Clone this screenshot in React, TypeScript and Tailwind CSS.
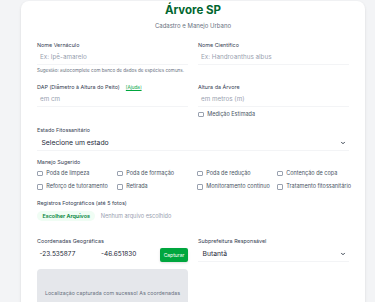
import React from "react"
import { ChevronDown } from "lucide-react"

function Label({ children }: { children: React.ReactNode }) {
  return <label className="block text-[5.4px] leading-[7px] text-gray-700">{children}</label>
}

function Input({ placeholder, value }: { placeholder?: string; value?: string }) {
  return (
    <div className="mt-[2.5px] h-[14px] px-[3px] flex items-center border-b border-gray-100 bg-white">
      {value ? (
        <span className="text-[6.5px] text-gray-800">{value}</span>
      ) : (
        <span className="text-[6.3px] text-gray-400">{placeholder}</span>
      )}
    </div>
  )
}

function Select({ value }: { value: string }) {
  return (
    <div className="mt-[2px] h-[15px] pl-[4.5px] pr-[3px] flex items-center justify-between border-b border-gray-100 bg-white">
      <span className="text-[6.8px] text-gray-800">{value}</span>
      <ChevronDown className="w-[6px] h-[6px] text-gray-800" strokeWidth={3.5} />
    </div>
  )
}

function Check({ label }: { label: string }) {
  return (
    <div className="flex items-center gap-[3.8px] text-[5.5px] leading-[7px] text-gray-600 whitespace-nowrap">
      <span className="w-[5.5px] h-[5.5px] border border-gray-400 rounded-[1px] bg-white shrink-0" />
      {label}
    </div>
  )
}

const manejos = [
  "Poda de limpeza",
  "Poda de formação",
  "Poda de redução",
  "Contenção de copa",
  "Reforço de tutoramento",
  "Retirada",
  "Monitoramento contínuo",
  "Tratamento fitossanitário",
]

export default function App() {
  return (
    <div className="min-h-screen bg-gray-100 font-['Inter',sans-serif] pl-[21px] pr-[10px] pt-px">
      <div className="bg-white shadow-sm rounded-lg px-4 pt-[2px] pb-4">
        <h1 className="text-center text-[11.5px] leading-[14px] font-bold text-green-800">Árvore SP</h1>
        <p className="mt-[4.5px] text-center text-[6px] leading-[8px] text-gray-500">Cadastro e Manejo Urbano</p>

        <div className="mt-3 grid grid-cols-2 gap-x-[10px] gap-y-[9.5px]">
          <div>
            <Label>Nome Vernáculo</Label>
            <Input placeholder="Ex: Ipê-amarelo" />
            <p className="mt-[3px] text-[4.6px] leading-[6px] text-gray-500">
              Sugestão: autocomplete com banco de dados de espécies comuns.
            </p>
          </div>
          <div>
            <Label>Nome Científico</Label>
            <Input placeholder="Ex: Handroanthus albus" />
          </div>
          <div>
            <Label>
              DAP (Diâmetro à Altura do Peito)
              <span className="ml-[6px] text-[4.6px] text-green-600 underline">[Ajuda]</span>
            </Label>
            <Input placeholder="em cm" />
          </div>
          <div>
            <Label>Altura da Árvore</Label>
            <Input placeholder="em metros (m)" />
            <div className="mt-[4.2px]">
              <Check label="Medição Estimada" />
            </div>
          </div>
        </div>

        <div className="mt-[8.5px]">
          <Label>Estado Fitossanitário</Label>
          <Select value="Selecione um estado" />
        </div>

        <div className="mt-[8.3px]">
          <Label>Manejo Sugerido</Label>
          <div className="mt-[4px] grid grid-cols-4 gap-x-2 gap-y-[6.4px]">
            {manejos.map((m) => (
              <Check key={m} label={m} />
            ))}
          </div>
        </div>

        <div className="mt-[9.6px]">
          <Label>Registros Fotográficos (até 5 fotos)</Label>
          <div className="mt-[4.5px] flex items-center gap-[5.3px]">
            <button className="h-[10px] px-[5.5px] rounded-full bg-green-50 text-green-700 font-semibold text-[5.4px]">
              Escolher Arquivos
            </button>
            <span className="text-[5.6px] text-gray-400">Nenhum arquivo escolhido</span>
          </div>
        </div>

        <div className="mt-[17px] grid grid-cols-2 gap-x-[10px]">
          <div>
            <Label>Coordenadas Geográficas</Label>
            <div className="mt-[2.8px] flex items-center gap-[3.5px]">
              <div className="w-[58px] h-[14px] px-[2.5px] flex items-center text-[6.5px] text-gray-800">-23.535877</div>
              <div className="w-[58px] h-[14px] px-[2.5px] flex items-center text-[6.5px] text-gray-800">-46.651830</div>
              <button className="w-[28px] h-[14px] rounded-[2px] bg-green-600 text-white text-[5px] shadow-sm">
                Capturar
              </button>
            </div>
            <div className="mt-[6.7px] h-[60px] rounded bg-gray-200 pt-[14px] px-[6px] text-center text-[5.3px] leading-[20px] text-gray-500">
              Localização capturada com sucesso! As coordenadas foram registradas.
            </div>
          </div>
          <div>
            <Label>Subprefeitura Responsável</Label>
            <Select value="Butantã" />
          </div>
        </div>
      </div>
    </div>
  )
}
